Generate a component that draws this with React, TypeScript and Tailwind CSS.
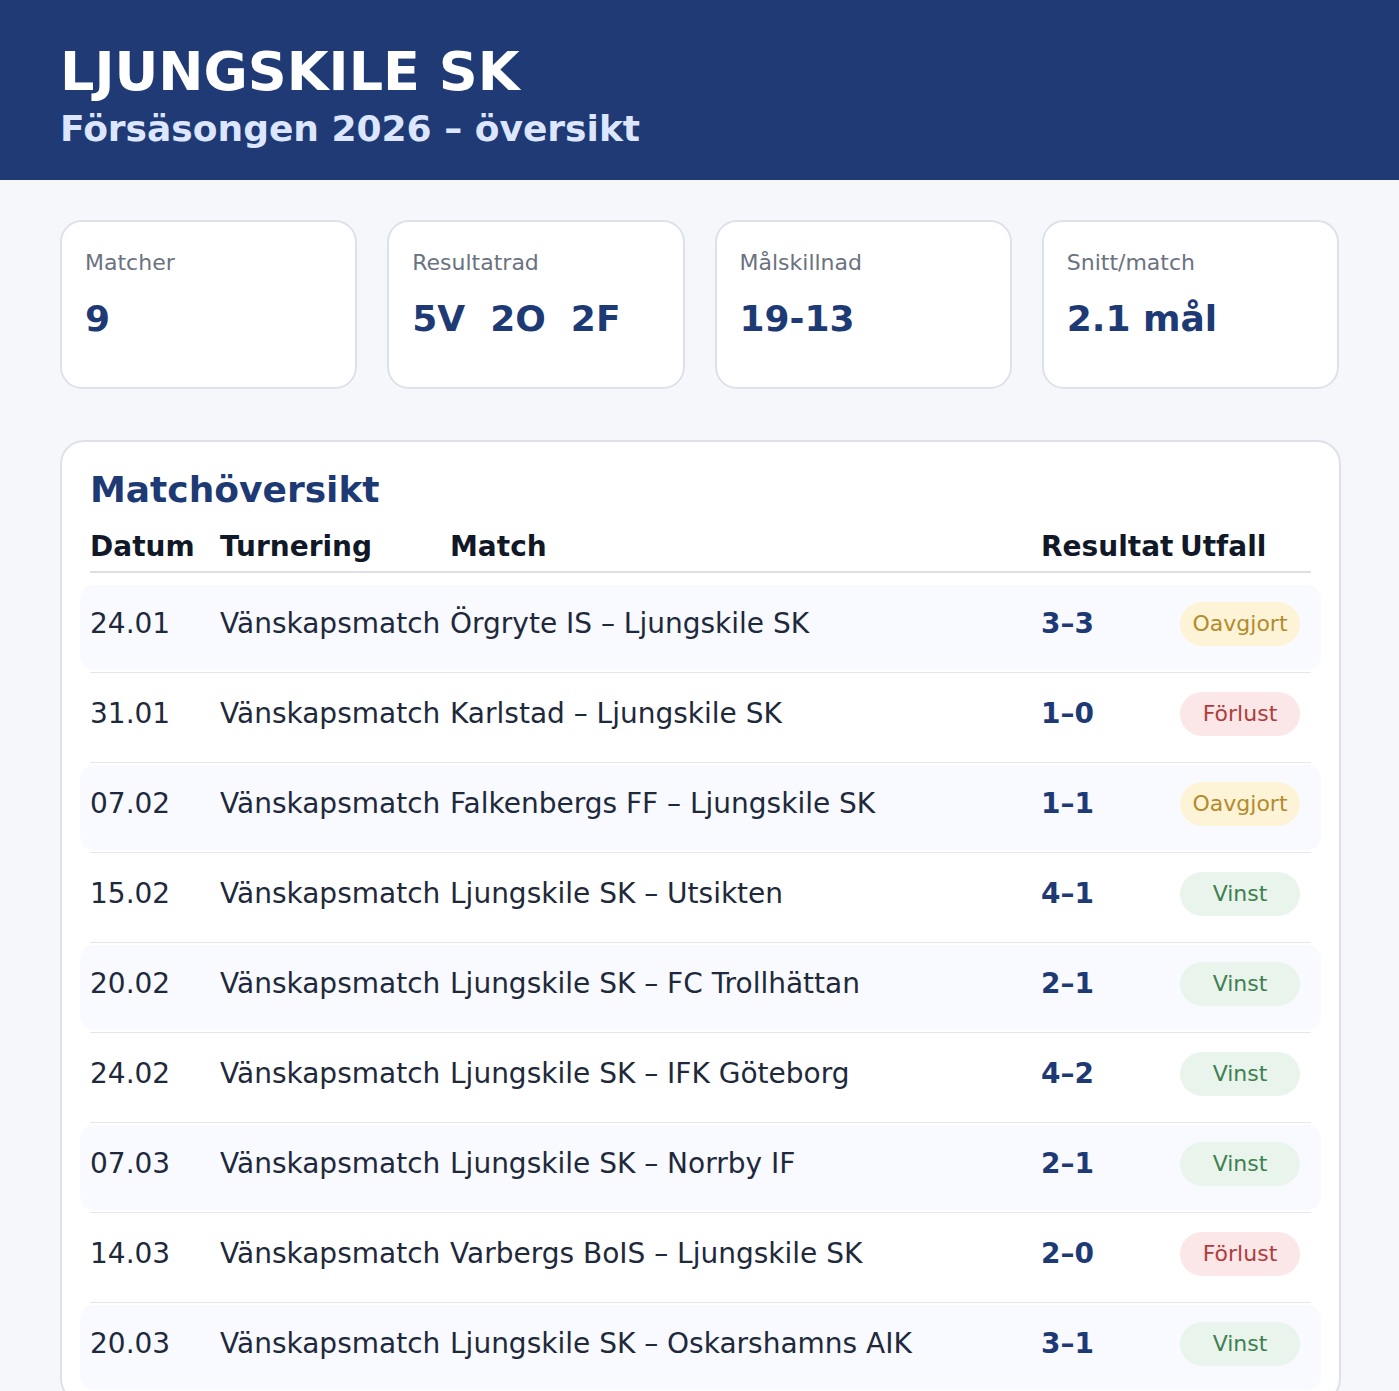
type Outcome = "Vinst" | "Förlust" | "Oavgjort";

type Game = {
  date: string;
  cup: string;
  match: string;
  score: string;
  outcome: Outcome;
};

const games: Game[] = [
  { date: "24.01", cup: "Vänskapsmatch", match: "Örgryte IS – Ljungskile SK", score: "3–3", outcome: "Oavgjort" },
  { date: "31.01", cup: "Vänskapsmatch", match: "Karlstad – Ljungskile SK", score: "1–0", outcome: "Förlust" },
  { date: "07.02", cup: "Vänskapsmatch", match: "Falkenbergs FF – Ljungskile SK", score: "1–1", outcome: "Oavgjort" },
  { date: "15.02", cup: "Vänskapsmatch", match: "Ljungskile SK – Utsikten", score: "4–1", outcome: "Vinst" },
  { date: "20.02", cup: "Vänskapsmatch", match: "Ljungskile SK – FC Trollhättan", score: "2–1", outcome: "Vinst" },
  { date: "24.02", cup: "Vänskapsmatch", match: "Ljungskile SK – IFK Göteborg", score: "4–2", outcome: "Vinst" },
  { date: "07.03", cup: "Vänskapsmatch", match: "Ljungskile SK – Norrby IF", score: "2–1", outcome: "Vinst" },
  { date: "14.03", cup: "Vänskapsmatch", match: "Varbergs BoIS – Ljungskile SK", score: "2–0", outcome: "Förlust" },
  { date: "20.03", cup: "Vänskapsmatch", match: "Ljungskile SK – Oskarshamns AIK", score: "3–1", outcome: "Vinst" },
];

const pillStyles: Record<Outcome, string> = {
  Vinst: "bg-[#e9f5ec] text-[#3f7f50]",
  Förlust: "bg-[#fbe7e7] text-[#b03d3d]",
  Oavgjort: "bg-[#fdf4d8] text-[#b48b2c]",
};

const StatCard = ({ label, children }: { label: string; children: React.ReactNode }) => (
  <div className="h-[169px] rounded-[22px] border-2 border-[#dde1ea] bg-white pl-[23px] pt-[30px]">
    <p className="text-[22px] leading-none text-[#6b7280]">{label}</p>
    <div className="mt-[27px] text-[36px] font-bold leading-none text-[#1e3a75]">{children}</div>
  </div>
);

const App = () => {
  return (
    <div className="min-h-screen bg-[#f5f7fb] pb-10 font-['DejaVu_Sans',sans-serif]">
      {/* Header */}
      <header className="h-[180px] bg-[#1f3a75] px-[60px] pt-[45px]">
        <h1 className="text-[54px] font-bold leading-none text-white">LJUNGSKILE SK</h1>
        <p className="mt-[12px] text-[36px] font-bold leading-none text-[#dde6ff]">
          Försäsongen 2026 – översikt
        </p>
      </header>

      <main className="px-[60px] pt-[40px]">
        {/* Stats */}
        <div className="grid grid-cols-4 gap-[30px]">
          <StatCard label="Matcher">9</StatCard>
          <StatCard label="Resultatrad">
            <span className="flex gap-[25px]">
              <span>5V</span>
              <span>2O</span>
              <span>2F</span>
            </span>
          </StatCard>
          <StatCard label="Målskillnad">19-13</StatCard>
          <StatCard label="Snitt/match">2.1 mål</StatCard>
        </div>

        {/* Match list */}
        <section className="mt-[51px] w-[calc(100%+2px)] rounded-[24px] border-2 border-[#dde1ea] bg-white px-7 pt-[30px] pb-2">
          <h2 className="text-[36px] font-bold leading-none text-[#1e3a75]">Matchöversikt</h2>

          <div className="mt-[25px] grid grid-cols-[130px_230px_591px_139px_1fr] border-b-2 border-[#dcdfe6] pb-[10px] text-[28px] font-bold leading-none text-[#111827]">
            <span>Datum</span>
            <span>Turnering</span>
            <span>Match</span>
            <span>Resultat</span>
            <span>Utfall</span>
          </div>

          <div className="mt-[10px]">
            {games.map((g, i) => (
              <div key={g.date} className="border-b border-[#e5e7eb] py-[2px]">
                <div
                  className={`-mx-[10px] grid h-[85px] grid-cols-[130px_230px_591px_139px_1fr] rounded-[14px] px-[10px] pt-[17px] text-[28px] text-[#1e293b] ${
                    i % 2 === 0 ? "bg-[#f8faff]" : "bg-white"
                  }`}
                >
                  <span className="flex h-[44px] items-center leading-none">{g.date}</span>
                  <span className="flex h-[44px] items-center leading-none">{g.cup}</span>
                  <span className="flex h-[44px] items-center leading-none">{g.match}</span>
                  <span className="flex h-[44px] items-center font-bold leading-none text-[#1e3a75]">
                    {g.score}
                  </span>
                  <span>
                    <span
                      className={`flex h-[44px] w-[120px] items-center justify-center rounded-full text-[22px] leading-none ${pillStyles[g.outcome]}`}
                    >
                      {g.outcome}
                    </span>
                  </span>
                </div>
              </div>
            ))}
          </div>
        </section>
      </main>
    </div>
  );
};

export default App;
